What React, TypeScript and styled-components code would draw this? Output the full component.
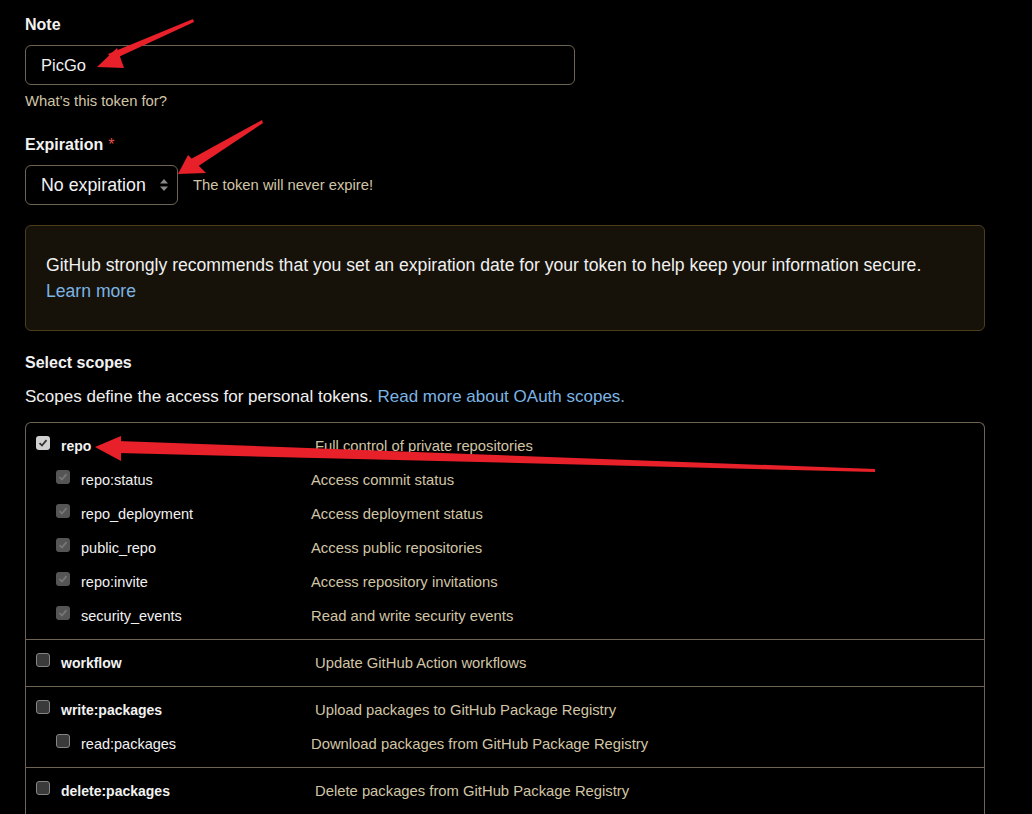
import * as React from "react"
import styled, { createGlobalStyle } from "styled-components"

const GlobalStyle = createGlobalStyle`
    body {
        margin: 0;
        background: #000;
        font-family: "Liberation Sans", Arial, sans-serif;
        color: #f0f0f0;
    }
`;

const Page = styled.div`
    position: relative;
    width: 960px;
    padding: 15px 47px 0 25px;
`;

const Label = styled.div`
    font-size: 16px;
    font-weight: 700;
    line-height: 20px;
    color: #f2f2f2;
    span {
        color: #e5534b;
        margin-left: 5px;
        font-weight: 400;
    }
`;

const TextInput = styled.div`
    box-sizing: border-box;
    width: 550px;
    height: 40px;
    margin-top: 10px;
    padding: 0 15px;
    display: flex;
    align-items: center;
    border: 1px solid #6d6453;
    border-radius: 6px;
    font-size: 16.5px;
    color: #f2f2f2;
`;

const Hint = styled.div`
    font-size: 14.8px;
    color: #d2c5a6;
    line-height: 20px;
`;

const NoteHint = styled(Hint)`
    margin-top: 6px;
`;

const ExpirationField = styled.div`
    margin-top: 24px;
`;

const SelectRow = styled.div`
    display: flex;
    align-items: center;
    gap: 15px;
    margin-top: 10px;
`;

const Select = styled.div`
    box-sizing: border-box;
    height: 40px;
    width: 153px;
    padding: 0 9px 0 15px;
    display: flex;
    align-items: center;
    justify-content: space-between;
    border: 1px solid #6d6453;
    border-radius: 6px;
    font-size: 17.8px;
    color: #f2f2f2;
`;

const Banner = styled.div`
    margin-top: 20px;
    padding: 26px 20px;
    border: 1px solid #4d3d1a;
    border-radius: 6px;
    background: #16120a;
    font-size: 17.6px;
    line-height: 26px;
    color: #f0f0f0;
`;

const Link = styled.a<{ $block?: boolean }>`
    color: #7cb4e4;
    text-decoration: none;
    display: ${p => (p.$block ? "block" : "inline")};
`;

const ScopesTitle = styled(Label)`
    margin-top: 22px;
`;

const ScopesIntro = styled.div`
    margin-top: 14px;
    font-size: 17px;
    line-height: 20px;
    color: #f0f0f0;
`;

const ScopeTable = styled.div`
    margin-top: 15px;
    border: 1px solid #6d6453;
    border-bottom: none;
    border-radius: 6px 6px 0 0;
`;

const ScopeGroup = styled.div`
    padding: 6px 0;
    border-bottom: 1px solid #6d6453;
`;

const Row = styled.div<{ $sub?: boolean }>`
    display: grid;
    grid-template-columns: 14px ${p => (p.$sub ? "219px" : "243px")} 1fr;
    column-gap: 11px;
    align-items: center;
    height: 34px;
    padding-left: ${p => (p.$sub ? "30px" : "10px")};
`;

const ScopeName = styled.div<{ $sub?: boolean }>`
    font-size: ${p => (p.$sub ? "14.5px" : "14px")};
    font-weight: ${p => (p.$sub ? 400 : 700)};
    color: #f2f2f2;
`;

const ScopeDesc = styled.div`
    font-size: 14.8px;
    color: #d2c5a6;
`;

const Box = styled.span<{ $state: "on" | "locked" | "off" }>`
    box-sizing: border-box;
    width: 14px;
    height: 14px;
    border-radius: 3px;
    display: flex;
    align-items: center;
    justify-content: center;
    background: ${p => (p.$state === "on" ? "#d0d0d0" : p.$state === "locked" ? "#555" : "#3a3a3a")};
    border: 1px solid ${p => (p.$state === "off" ? "#858585" : "transparent")};
    margin-top: -6px;
`;

const Arrows = styled.svg`
    position: absolute;
    left: 0;
    top: 0;
    pointer-events: none;
`;

const Check = ({ state }: { state: "on" | "locked" | "off" }) => (
    <Box $state={state}>
        {state !== "off" && (
            <svg width="10" height="10" viewBox="0 0 10 10">
                <path d="M1.5 5.2 L4 7.5 L8.5 2.2" fill="none" stroke={state === "on" ? "#333" : "#777"} strokeWidth="1.8" />
            </svg>
        )}
    </Box>
);

type Scope = { name: string; desc: string; sub?: boolean; state: "on" | "locked" | "off" }

const groups: Scope[][] = [
    [
        { name: "repo", desc: "Full control of private repositories", state: "on" },
        { name: "repo:status", desc: "Access commit status", sub: true, state: "locked" },
        { name: "repo_deployment", desc: "Access deployment status", sub: true, state: "locked" },
        { name: "public_repo", desc: "Access public repositories", sub: true, state: "locked" },
        { name: "repo:invite", desc: "Access repository invitations", sub: true, state: "locked" },
        { name: "security_events", desc: "Read and write security events", sub: true, state: "locked" },
    ],
    [{ name: "workflow", desc: "Update GitHub Action workflows", state: "off" }],
    [
        { name: "write:packages", desc: "Upload packages to GitHub Package Registry", state: "off" },
        { name: "read:packages", desc: "Download packages from GitHub Package Registry", sub: true, state: "off" },
    ],
    [{ name: "delete:packages", desc: "Delete packages from GitHub Package Registry", state: "off" }],
];

const App = () => {
    return (
        <>
            <GlobalStyle />
            <Page>
                <Label>Note</Label>
                <TextInput>PicGo</TextInput>
                <NoteHint>What’s this token for?</NoteHint>

                <ExpirationField>
                    <Label>Expiration<span>*</span></Label>
                    <SelectRow>
                        <Select>
                            No expiration
                            <svg width="8" height="12" viewBox="0 0 8 12">
                                <path d="M4 0 L8 4.5 H0 Z M4 12 L8 7.5 H0 Z" fill="#8a8a8a" />
                            </svg>
                        </Select>
                        <Hint>The token will never expire!</Hint>
                    </SelectRow>
                </ExpirationField>

                <Banner>
                    GitHub strongly recommends that you set an expiration date for your token to help keep your information secure.
                    <Link $block href="#">Learn more</Link>
                </Banner>

                <ScopesTitle>Select scopes</ScopesTitle>
                <ScopesIntro>
                    Scopes define the access for personal tokens. <Link href="#">Read more about OAuth scopes.</Link>
                </ScopesIntro>

                <ScopeTable>
                    {groups.map((g, i) => (
                        <ScopeGroup key={i}>
                            {g.map(s => (
                                <Row key={s.name} $sub={s.sub}>
                                    <Check state={s.state} />
                                    <ScopeName $sub={s.sub}>{s.name}</ScopeName>
                                    <ScopeDesc>{s.desc}</ScopeDesc>
                                </Row>
                            ))}
                        </ScopeGroup>
                    ))}
                </ScopeTable>

                <Arrows width="1032" height="814" viewBox="0 0 1032 814">
                    <g fill="#e8202a">
                        <polygon points="193,19 194,22 112,60 108,54" />
                        <polygon points="97,67 117,48 124,68" />
                        <polygon points="262,120 263,123 197,167 191,159" />
                        <polygon points="178,174 188,155 206,173" />
                        <polygon points="118,441 875,469 875,472 118,453" />
                        <polygon points="95,447 121,436 121,461" />
                    </g>
                </Arrows>
            </Page>
        </>
    )
}

export default App;
